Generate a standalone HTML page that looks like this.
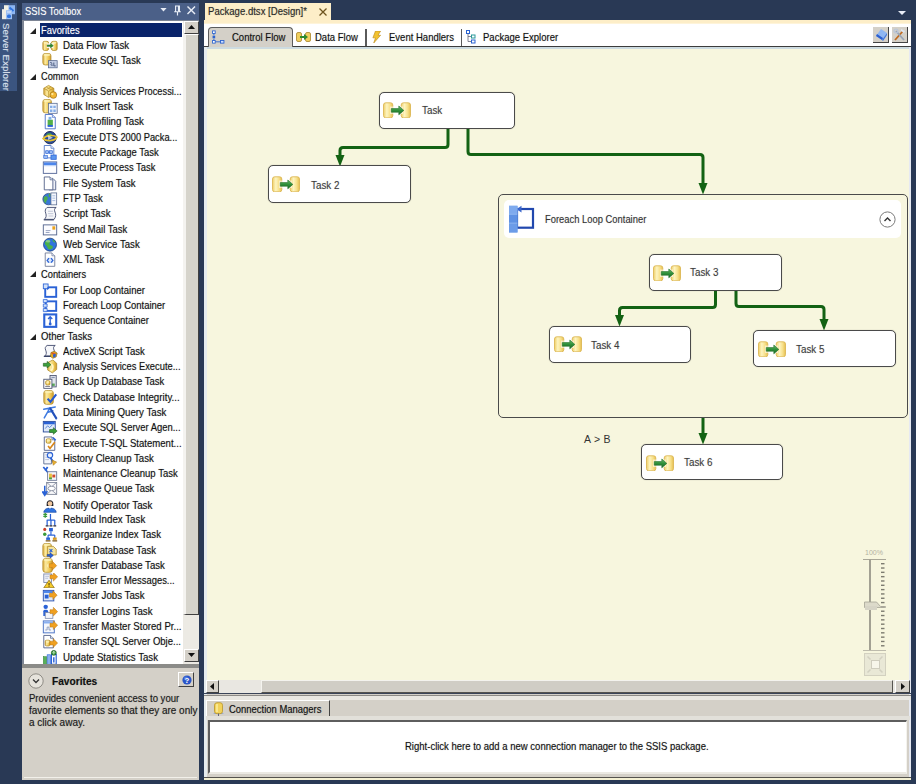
<!DOCTYPE html>
<html><head><meta charset="utf-8"><title>Package.dtsx [Design]</title>
<style>
html,body{margin:0;padding:0}
body{width:916px;height:784px;background:#293955;position:relative;overflow:hidden;font-family:"Liberation Sans",sans-serif;font-size:10.3px;color:#111}
div,svg{position:absolute;box-sizing:border-box}
.t{text-shadow:0 0 1px rgba(0,0,0,.35);display:inline-block;transform:scaleX(.924);transform-origin:0 50%;white-space:nowrap}
.t2{text-shadow:0 0 1px rgba(0,0,0,.25);display:inline-block;transform:scaleX(.965);transform-origin:0 50%;white-space:nowrap}
.row{left:23px;width:162px;height:15.29px;line-height:15.29px}
.row .tri{left:6.5px;top:5px;width:6px;height:6px}
.row .ic{left:19px;top:0;width:16px;height:15.29px}
.row .cat{left:17px;top:.3px;width:142px;height:13.800px;line-height:15.6px;padding-left:1px}
.row .cat.sel{background:#0a246a;color:#fff}
.row .cat.sel .t,.w .t{text-shadow:0 0 1px rgba(255,255,255,.4)}
.row .it{left:39.5px;top:0;width:124px;height:15.29px;overflow:hidden}
.task{background:#fff;border:1.2px solid #4a4a4a;border-radius:5px;box-shadow:0 0 1px rgba(0,0,0,.35)}
.tic{position:static;display:block;width:28px;height:16px}
.tl{line-height:14px;height:14px;font-size:10.2px;color:#3c3c3c}
</style></head><body>
<svg style="width:0;height:0;left:0;top:0"><defs><linearGradient id="gy" x1="0" x2="1" y1="0" y2="0"><stop offset="0" stop-color="#d9a93a"/><stop offset=".3" stop-color="#fbeaa0"/><stop offset=".65" stop-color="#f1cd5c"/><stop offset="1" stop-color="#cf9c2c"/></linearGradient></defs></svg>
<!-- left auto-hide strip -->
<div style="left:0;top:3px;width:17px;height:88px;background:#3b5580"></div>
<svg style="left:0;top:3px;width:17px;height:18px" viewBox="0 0 17 18"><rect x="4" y="2.2" width="5" height="9" fill="#f2f1e4"/><rect x="8.5" y="2.2" width="6.5" height="9" fill="#8db6f2"/><path d="M9.5 4.5l4 3.5" stroke="#2f74e0" stroke-width="2"/><rect x="2" y="6.2" width="4.2" height="10" fill="#efeee6"/><rect x="6" y="7.2" width="6" height="9" fill="#9cc0f4"/><rect x="7" y="11.5" width="4" height="3.5" rx="1.5" fill="#2f74e0"/><path d="M7 9h4" stroke="#dfe9fb" stroke-width="1"/></svg>
<div class="w" style="left:12px;top:23px;width:70px;height:12px;line-height:12px;color:#dfe6f2;transform:rotate(90deg);transform-origin:0 0;font-size:9.5px"><span class="t" style="transform:scaleX(1.03)">Server Explorer</span></div>

<!-- toolbox -->
<div style="left:22px;top:3px;width:177px;height:17px;background:#4b6088"></div>
<div class="w" style="left:24.5px;top:4.3px;height:15px;line-height:15px;color:#fff"><span class="t" style="transform:scaleX(.913)">SSIS Toolbox</span></div>
<svg style="left:160px;top:8.2px;width:7px;height:3.6px" viewBox="0 0 7 4"><path d="M0 0h7L3.5 4z" fill="#e8edf6"/></svg>
<svg style="left:173px;top:4.800px;width:9px;height:11.5px" viewBox="0 0 9 12"><path d="M2.5 1h4v6h-4zM1 7h7M4.5 7v4" stroke="#e8edf6" stroke-width="1.2" fill="none"/><path d="M5.5 1v6" stroke="#e8edf6" stroke-width="1.2"/></svg>
<svg style="left:187px;top:6px;width:8.5px;height:8.5px" viewBox="0 0 9 9"><path d="M.5.5l8 8M8.5.5l-8 8" stroke="#e8edf6" stroke-width="1.5"/></svg>
<div style="left:22px;top:20px;width:177px;height:644px;background:#fff;border-left:2px solid #7d8594;border-top:1.5px solid #7d8594"></div>
<div class="row" style="top:22.70px"><svg class="tri" viewBox="0 0 5 5"><path d="M5 0v5H0z" fill="#222"/></svg><div class="cat sel"><span class="t" style="transform:scaleX(0.911)">Favorites</span></div></div>
<div class="row" style="top:37.99px"><svg class="ic" viewBox="0 0 16 16"><rect x="0.5" y="3.5" width="6" height="9.5" rx="1.7" fill="url(#gy)" stroke="#b08a28" stroke-width="0.8"/><ellipse cx="3.5" cy="5.1" rx="2.4" ry="1.2" fill="#fdf3b8" opacity=".8"/><rect x="9.5" y="3.5" width="6" height="9.5" rx="1.7" fill="url(#gy)" stroke="#b08a28" stroke-width="0.8"/><ellipse cx="12.5" cy="5.1" rx="2.4" ry="1.2" fill="#fdf3b8" opacity=".8"/><rect x="4.5" y="5.5" width="7" height="5" fill="#fff" opacity=".85"/><path d="M5 7.2h3.5v-1.700l3 2.5-3 2.5v-1.700H5z" fill="#2e8b2e" stroke="#1c5c1c" stroke-width=".4"/></svg><div class="it"><span class="t" style="transform:scaleX(0.943)">Data Flow Task</span></div></div>
<div class="row" style="top:53.28px"><svg class="ic" viewBox="0 0 16 16"><rect x="0.5" y="0.5" width="8.5" height="12" rx="2.4" fill="url(#gy)" stroke="#b08a28" stroke-width="0.8"/><ellipse cx="4.75" cy="2.1" rx="3.65" ry="1.2" fill="#fdf3b8" opacity=".8"/><rect x="6.5" y="8" width="9" height="7.5" fill="#c3cee4" stroke="#56688e" stroke-width=".8"/><path d="M8 10.5c1-1.5 2.5 0 1.5 1s0 2 1.5 1M12 10v3.5h2" stroke="#3a4a72" fill="none" stroke-width=".9"/></svg><div class="it"><span class="t" style="transform:scaleX(0.923)">Execute SQL Task</span></div></div>
<div class="row" style="top:68.57px"><svg class="tri" viewBox="0 0 5 5"><path d="M5 0v5H0z" fill="#222"/></svg><div class="cat"><span class="t" style="transform:scaleX(0.9)">Common</span></div></div>
<div class="row" style="top:83.86px"><svg class="ic" viewBox="0 0 16 16"><path d="M1.5 4.5l5-3 5.5 3v6.5l-5.5 3-5-3z" fill="url(#gy)" stroke="#b08a28" stroke-width=".8"/><path d="M1.5 4.5l5 3 5.5-3M6.5 7.5v6.5M4 3l5 3M9 3L4 6" stroke="#b08a28" fill="none" stroke-width=".6"/><circle cx="11.5" cy="11.5" r="3.5" fill="#f2b632" stroke="#9a6c14" stroke-width=".7"/><circle cx="10.5" cy="10.5" r="1.2" fill="#fde9a0"/></svg><div class="it"><span class="t" style="transform:scaleX(0.901)">Analysis Services Processi...</span></div></div>
<div class="row" style="top:99.15px"><svg class="ic" viewBox="0 0 16 16"><rect x="0.5" y="0.5" width="9" height="14" rx="2.5" fill="url(#gy)" stroke="#b08a28" stroke-width="0.8"/><ellipse cx="5.0" cy="2.1" rx="3.9" ry="1.2" fill="#fdf3b8" opacity=".8"/><rect x="6.5" y="4.5" width="9" height="10.5" fill="#eef3fb" stroke="#56688e" stroke-width=".8"/><path d="M8 7h2.5v2.5H8zM11.5 7H14v2.5h-2.5zM8 11h2.5v2.5H8zM11.5 11H14v2.5h-2.5z" fill="#86aee8"/></svg><div class="it"><span class="t" style="transform:scaleX(0.968)">Bulk Insert Task</span></div></div>
<div class="row" style="top:114.44px"><svg class="ic" viewBox="0 0 16 16"><path d="M3 0.5h7.5l3 3v12H3z" fill="#fff" stroke="#3f66c4" stroke-width=".9"/><path d="M10.5 0.5v3h3" fill="#dfe6f4" stroke="#3f66c4" stroke-width=".7"/><rect x="5.5" y="6" width="5.5" height="6" fill="#55b04a"/><rect x="5.5" y="11.5" width="5.5" height="2" fill="#2a62d6"/><rect x="6.5" y="3" width="3" height="3" fill="#7fb0ea"/></svg><div class="it"><span class="t" style="transform:scaleX(0.945)">Data Profiling Task</span></div></div>
<div class="row" style="top:129.73px"><svg class="ic" viewBox="0 0 16 16"><circle cx="8" cy="8" r="6.5" fill="#274a9a" stroke="#16234a" stroke-width=".9"/><path d="M4 5c2-2 5-2 6 0s-2 3-3 2z" fill="#4aa24a"/><path d="M.8 9c3-4 11.5-4 14.4-1.5c-2 4.5-11.5 4.5-14.4 1.5z" fill="none" stroke="#e6c030" stroke-width="1.800"/><path d="M6 5.5l5 2.5-5 2.5z" fill="#f4f4f4" opacity=".7"/></svg><div class="it"><span class="t" style="transform:scaleX(0.904)">Execute DTS 2000 Packa...</span></div></div>
<div class="row" style="top:145.02px"><svg class="ic" viewBox="0 0 16 16"><path d="M2 0.5h7l3 3v10H2z" fill="#fff" stroke="#4a72c4" stroke-width=".9"/><path d="M9 0.5v3h3" fill="#dfe6f4" stroke="#4a72c4" stroke-width=".7"/><rect x="3.5" y="6" width="3" height="3" fill="#9dbdf2" stroke="#2a62d6" stroke-width=".7"/><rect x="7.5" y="6" width="3" height="3" fill="#9dbdf2" stroke="#2a62d6" stroke-width=".7"/><path d="M6.5 7.5h1" stroke="#2a62d6"/><rect x="9" y="10.5" width="5.5" height="4.5" fill="#5a96ee" stroke="#2a62d6" stroke-width=".8"/><rect x="1.5" y="11" width="4" height="3" fill="#9dbdf2" stroke="#2a62d6" stroke-width=".6"/></svg><div class="it"><span class="t" style="transform:scaleX(0.92)">Execute Package Task</span></div></div>
<div class="row" style="top:160.31px"><svg class="ic" viewBox="0 0 16 16"><rect x="1" y="2" width="14" height="12" fill="#fdfdff" stroke="#5a6c9c" stroke-width="1"/><rect x="1.5" y="2.5" width="13" height="3" fill="#4d86ec"/><rect x="1.5" y="5.5" width="13" height="1" fill="#b9d0f6"/></svg><div class="it"><span class="t" style="transform:scaleX(0.914)">Execute Process Task</span></div></div>
<div class="row" style="top:175.60px"><svg class="ic" viewBox="0 0 16 16"><path d="M7 2.5h4l3 3v9H7z" fill="#eef1f8" stroke="#4a5a84" stroke-width=".9"/><path d="M2 1h6l3 3v10.5H2z" fill="#fff" stroke="#4a5a84" stroke-width=".9"/><path d="M8 1v3h3" fill="#dfe6f4" stroke="#4a5a84" stroke-width=".7"/></svg><div class="it"><span class="t" style="transform:scaleX(0.934)">File System Task</span></div></div>
<div class="row" style="top:190.89px"><svg class="ic" viewBox="0 0 16 16"><circle cx="6.5" cy="8.5" r="6" fill="#3a78d6" stroke="#1c3a70" stroke-width=".7"/><path d="M2 6c2-1 4 0 3.5 2S3 11 4 13c-2-1-3.5-4-2-7zM7 3c2 0 2 2 1 3s-2 0-1-3z" fill="#4cae4c"/><rect x="9" y="2" width="6" height="12.5" fill="#f4f7fd" stroke="#56688e" stroke-width=".8"/><path d="M10.5 5h3M10.5 7.5h3M10.5 10h3" stroke="#9fb4dc" stroke-width=".9"/></svg><div class="it"><span class="t" style="transform:scaleX(0.921)">FTP Task</span></div></div>
<div class="row" style="top:206.18px"><svg class="ic" viewBox="0 0 16 16"><path d="M5 1.5h9.5c-2 .8-2.2 3-1.2 5s1 5-1 7.5H2c2-1.5 2.5-4 1.5-6.5S3 3 5 1.5z" fill="#f6f7fa" stroke="#3a4468" stroke-width=".9"/><path d="M1.5 14.5h10.5" stroke="#3a4468" stroke-width="1.2"/><path d="M6 5.5h5M6 8h5.5M6.5 10.5h5" stroke="#a8b0c6" stroke-width=".7"/></svg><div class="it"><span class="t" style="transform:scaleX(0.947)">Script Task</span></div></div>
<div class="row" style="top:222.27px"><svg class="ic" viewBox="0 0 16 16"><rect x="1" y="3" width="14" height="10.5" fill="#fcfcff" stroke="#5a6a92" stroke-width="1"/><rect x="10.5" y="4.5" width="3" height="3.5" fill="#eaa21c"/><path d="M3.5 9h5M3.5 11h4" stroke="#8896b8" stroke-width=".9"/></svg><div class="it"><span class="t" style="transform:scaleX(0.923)">Send Mail Task</span></div></div>
<div class="row" style="top:236.76px"><svg class="ic" viewBox="0 0 16 16"><circle cx="8" cy="8" r="6.800" fill="#2f74dc" stroke="#173a78" stroke-width=".8"/><path d="M3 5c1.5-2 4-2.5 5-1s-1 2-.5 3.5 3 1 3.5 2.5-2 3.5-4 3-1.5-3-3-4-1.5-2.5-1-4zM10.5 3c1.5 0 3 1.5 3 3-1 0-2.5-.5-3-3z" fill="#49b049"/><ellipse cx="6" cy="4.5" rx="2.5" ry="1.3" fill="#fff" opacity=".35"/></svg><div class="it"><span class="t" style="transform:scaleX(0.935)">Web Service Task</span></div></div>
<div class="row" style="top:252.05px"><svg class="ic" viewBox="0 0 16 16"><path d="M3 1h7l3 3v11H3z" fill="#fff" stroke="#6a7694" stroke-width=".9"/><path d="M10 1v3h3" fill="#dfe6f4" stroke="#6a7694" stroke-width=".7"/><rect x="4.5" y="6" width="7" height="5.5" fill="#dbe8fb"/><path d="M7 6.5L5 8.800l2 2.3M9 6.5l2 2.3-2 2.3" stroke="#2a62d6" fill="none" stroke-width="1.3"/></svg><div class="it"><span class="t" style="transform:scaleX(0.925)">XML Task</span></div></div>
<div class="row" style="top:266.34px"><svg class="tri" viewBox="0 0 5 5"><path d="M5 0v5H0z" fill="#222"/></svg><div class="cat"><span class="t" style="transform:scaleX(0.906)">Containers</span></div></div>
<div class="row" style="top:282.63px"><svg class="ic" viewBox="0 0 16 16"><rect x="3" y="4.5" width="11.5" height="10" fill="#fff" stroke="#2a62d6" stroke-width="2"/><rect x="1" y="1" width="5" height="5" fill="#cfe0fa" stroke="#2a62d6" stroke-width=".9"/><path d="M5 7.5l3-3h-3z" fill="#2a62d6"/></svg><div class="it"><span class="t" style="transform:scaleX(0.923)">For Loop Container</span></div></div>
<div class="row" style="top:297.92px"><svg class="ic" viewBox="0 0 16 16"><rect x="3.5" y="3.5" width="11" height="10" fill="#fff" stroke="#2a62d6" stroke-width="2"/><path d="M1 1.5h4v3.3H1zM1 6.3h4v3.3H1zM1 11h4v3.3H1z" fill="#cfe0fa" stroke="#2a62d6" stroke-width=".8"/></svg><div class="it"><span class="t" style="transform:scaleX(0.921)">Foreach Loop Container</span></div></div>
<div class="row" style="top:313.21px"><svg class="ic" viewBox="0 0 16 16"><rect x="2" y="1.5" width="12.5" height="13" fill="#fff" stroke="#2a62d6" stroke-width="2.2"/><path d="M8.2 4v8M6 6.2l2.2-2.2 2.2 2.2" stroke="#2a62d6" stroke-width="1.4" fill="none"/><circle cx="8.2" cy="11.5" r="1.5" fill="#2a62d6"/></svg><div class="it"><span class="t" style="transform:scaleX(0.915)">Sequence Container</span></div></div>
<div class="row" style="top:328.50px"><svg class="tri" viewBox="0 0 5 5"><path d="M5 0v5H0z" fill="#222"/></svg><div class="cat"><span class="t" style="transform:scaleX(0.932)">Other Tasks</span></div></div>
<div class="row" style="top:343.79px"><svg class="ic" viewBox="0 0 16 16"><path d="M5 1.5h8.5c-2 .8-2.2 3-1.2 5s1 4-1 6H2.5c2-1.5 2-3.5 1-6S3 3 5 1.5z" fill="#f6f7fa" stroke="#3a4468" stroke-width=".9"/><path d="M1.5 13h8" stroke="#3a4468" stroke-width="1.2"/><path d="M9 9l3.5-1.5 3 2-1 4-3.5 1.5-2.5-2z" fill="#e8b020" stroke="#7a5a10" stroke-width=".6"/><path d="M11 11l3-1v3l-2.5 1.5z" fill="#2a5fd0"/><path d="M9 9l2 2 3.5-1.5" fill="#d03a2a" opacity=".8"/></svg><div class="it"><span class="t" style="transform:scaleX(0.931)">ActiveX Script Task</span></div></div>
<div class="row" style="top:359.08px"><svg class="ic" viewBox="0 0 16 16"><path d="M6 3.5l5-2.5 4 3.5v6.5l-4.5 3.5-5-3z" fill="url(#gy)" stroke="#b08a28" stroke-width=".8"/><path d="M9.5 5.5c2 1 2 5-.5 6.5" stroke="#fff6c8" stroke-width="2" fill="none"/><path d="M1 4.5h4V2.5l4 3.5-4 3.5V7.5H1z" fill="#3ea03e" stroke="#1c5c1c" stroke-width=".6"/></svg><div class="it"><span class="t" style="transform:scaleX(0.909)">Analysis Services Execute...</span></div></div>
<div class="row" style="top:374.37px"><svg class="ic" viewBox="0 0 16 16"><rect x="8" y="1.5" width="6.5" height="12" fill="#e4e8f0" stroke="#4a5270" stroke-width=".9"/><rect x="9.5" y="3" width="3.5" height="1.3" fill="#8a94b0"/><rect x="9.5" y="10" width="3.5" height="2.5" fill="#58a858"/><rect x="1.5" y="5.5" width="8.5" height="9.5" fill="#fff" stroke="#4a5270" stroke-width=".9"/><rect x="3.5" y="7" width="4.5" height="4.5" rx="1.3" fill="url(#gy)" stroke="#b08a28" stroke-width="0.8"/><ellipse cx="5.75" cy="8.6" rx="1.65" ry="1.2" fill="#fdf3b8" opacity=".8"/><path d="M3 13h5" stroke="#667" stroke-width=".9"/></svg><div class="it"><span class="t" style="transform:scaleX(0.923)">Back Up Database Task</span></div></div>
<div class="row" style="top:389.66px"><svg class="ic" viewBox="0 0 16 16"><rect x="1.5" y="0.5" width="10" height="14.5" rx="2.8" fill="url(#gy)" stroke="#b08a28" stroke-width="0.8"/><ellipse cx="6.5" cy="2.1" rx="4.4" ry="1.2" fill="#fdf3b8" opacity=".8"/><path d="M5.5 9l3 3.5 6-8" stroke="#2558d0" stroke-width="2.2" fill="none"/></svg><div class="it"><span class="t" style="transform:scaleX(0.945)">Check Database Integrity...</span></div></div>
<div class="row" style="top:404.95px"><svg class="ic" viewBox="0 0 16 16"><path d="M1.5 4.5l12-2.5M8 3L2 13.5M7.5 3l7 11.5M6 7.5l5-1.5" stroke="#3f7ae0" stroke-width="1.6" fill="none" stroke-linecap="round"/><path d="M8 3l7 11.5" stroke="#2450b8" stroke-width="2"/></svg><div class="it"><span class="t" style="transform:scaleX(0.943)">Data Mining Query Task</span></div></div>
<div class="row" style="top:420.24px"><svg class="ic" viewBox="0 0 16 16"><rect x="1" y="1.5" width="12.5" height="11" fill="#dfe9f8" stroke="#2f4f9c" stroke-width="1"/><rect x="1.5" y="2" width="11.5" height="2.5" fill="#2a62d6"/><path d="M3 9l2.5-3 2 2 3-3" stroke="#5a86d8" fill="none" stroke-width="1"/><path d="M7.5 10h4V8l4 3.5-4 3.5v-2h-4z" fill="#3aa03a" stroke="#1c5c1c" stroke-width=".6"/></svg><div class="it"><span class="t" style="transform:scaleX(0.916)">Execute SQL Server Agen...</span></div></div>
<div class="row" style="top:435.53px"><svg class="ic" viewBox="0 0 16 16"><path d="M2 1h8l3 3v11H2z" fill="#fff" stroke="#4a5a84" stroke-width=".9"/><path d="M10 1v3h3" fill="#dfe6f4" stroke="#4a5a84" stroke-width=".7"/><rect x="4" y="3" width="5" height="4.5" rx="1.3" fill="url(#gy)" stroke="#b08a28" stroke-width="0.8"/><ellipse cx="6.5" cy="4.6" rx="1.9" ry="1.2" fill="#fdf3b8" opacity=".8"/><path d="M6 10.5l2 2.5 5-6.5" stroke="#d8861a" stroke-width="1.800" fill="none"/><path d="M11 1.5l3 3" stroke="#2a62d6" stroke-width="1.6"/></svg><div class="it"><span class="t" style="transform:scaleX(0.929)">Execute T-SQL Statement...</span></div></div>
<div class="row" style="top:450.82px"><svg class="ic" viewBox="0 0 16 16"><path d="M1.5 1.5h8v12h-8z" fill="#f4f6fb" stroke="#56688e" stroke-width=".9"/><path d="M3 4h4M3 6.5h3M3 9h4" stroke="#a8b4d0" stroke-width=".8"/><circle cx="8" cy="4.5" r="2.800" fill="#e8f0fc" stroke="#2a62d6" stroke-width="1.2"/><path d="M8.5 7l3 4.5" stroke="#2a62d6" stroke-width="2"/><path d="M10 9.5l5 2-3.5 3.5z" fill="#eab030" stroke="#9a6c14" stroke-width=".5"/></svg><div class="it"><span class="t" style="transform:scaleX(0.935)">History Cleanup Task</span></div></div>
<div class="row" style="top:466.11px"><svg class="ic" viewBox="0 0 16 16"><path d="M1 1l5 6M5.5 1L3 5" stroke="#2a62d6" stroke-width="1.800"/><rect x="5.5" y="6" width="9.5" height="9" fill="#f4f6fb" stroke="#6a7694" stroke-width=".9"/><rect x="7" y="8" width="3" height="5.5" fill="#e8c040"/><rect x="10.5" y="9" width="3" height="3" fill="#d04a2a"/><rect x="7" y="12" width="3" height="2" fill="#4aa04a"/></svg><div class="it"><span class="t" style="transform:scaleX(0.925)">Maintenance Cleanup Task</span></div></div>
<div class="row" style="top:481.40px"><svg class="ic" viewBox="0 0 16 16"><rect x="4.5" y="1.5" width="10.5" height="12.5" fill="#f8f8fa" stroke="#7a8296" stroke-width=".9"/><path d="M4.5 1.5l5.2 4.5 5.3-4.5M4.5 14l5.2-4.5 5.3 4.5" stroke="#7a8296" fill="none" stroke-width=".8"/><ellipse cx="9.700" cy="7.800" rx="3.800" ry="2.3" fill="#fff" stroke="#7a8296" stroke-width=".8"/><path d="M2.5 5v9M.3 11.5l2.2 3.5 2.2-3.5z" stroke="#2a62d6" stroke-width="1.6" fill="#2a62d6"/></svg><div class="it"><span class="t" style="transform:scaleX(0.919)">Message Queue Task</span></div></div>
<div class="row" style="top:497.69px"><svg class="ic" viewBox="0 0 16 16"><path d="M4.5 6.5c-.5-5.5 7.5-5.5 7 0v2h-7z" fill="#1a1a22"/><circle cx="8" cy="6" r="2.5" fill="#f0c8a0"/><path d="M1.5 15c0-6 13-6 13 0z" fill="#2f74e0" stroke="#1c4aa0" stroke-width=".7"/><path d="M6.5 9.5l1.5 2 1.5-2z" fill="#fff"/></svg><div class="it"><span class="t" style="transform:scaleX(0.955)">Notify Operator Task</span></div></div>
<div class="row" style="top:511.98px"><svg class="ic" viewBox="0 0 16 16"><path d="M3 1v5M1 2.5h4M1 4.5h4" stroke="#3a9a3a" stroke-width="1.4"/><path d="M8.5 2v6M5 8v6M9 8.5v5.5M13 8.5v5.5M5 8.5h8" stroke="#2a62d6" stroke-width="1.3" fill="none"/><path d="M3.5 14.5h3M7.5 14.5h3M11.5 14.5h3" stroke="#223" stroke-width="1.3"/></svg><div class="it"><span class="t" style="transform:scaleX(0.948)">Rebuild Index Task</span></div></div>
<div class="row" style="top:527.27px"><svg class="ic" viewBox="0 0 16 16"><circle cx="2.5" cy="2.5" r="1.6" fill="#c8402a"/><circle cx="2.5" cy="7.5" r="1.800" fill="#3a9a3a"/><rect x="7" y="1" width="4" height="3.5" fill="#2a62d6"/><path d="M9 4.5v4M6 8.5h7M6 8.5v3M13 8.5v3" stroke="#2a62d6" stroke-width="1.2" fill="none"/><rect x="4" y="11" width="4" height="2.5" fill="#2a62d6"/><rect x="11" y="11" width="4" height="2.5" fill="#d89a20"/><path d="M3.5 14.5h5M10.5 14.5h5" stroke="#7a5410" stroke-width="1.3"/></svg><div class="it"><span class="t" style="transform:scaleX(0.937)">Reorganize Index Task</span></div></div>
<div class="row" style="top:542.56px"><svg class="ic" viewBox="0 0 16 16"><rect x="0.5" y="0.5" width="9" height="14" rx="2.5" fill="url(#gy)" stroke="#b08a28" stroke-width="0.8"/><ellipse cx="5.0" cy="2.1" rx="3.9" ry="1.2" fill="#fdf3b8" opacity=".8"/><path d="M5.5 3.5h6l3 3v6h-9z" fill="#f4e4a0" stroke="#b08a28" stroke-width=".8"/><path d="M5 12h3v-2l3.5 3-3.5 3v-2H5z" fill="#2a62d6" stroke="#1c3c90" stroke-width=".5"/><path d="M7.5 6.5l3 3M10.5 6.5l-3 3" stroke="#2a62d6" stroke-width="1.2"/></svg><div class="it"><span class="t" style="transform:scaleX(0.931)">Shrink Database Task</span></div></div>
<div class="row" style="top:557.85px"><svg class="ic" viewBox="0 0 16 16"><rect x="0.5" y="0.5" width="10" height="14.5" rx="2.8" fill="url(#gy)" stroke="#b08a28" stroke-width="0.8"/><ellipse cx="5.5" cy="2.1" rx="4.4" ry="1.2" fill="#fdf3b8" opacity=".8"/><circle cx="7" cy="8" r="2.2" fill="#fdf0b0"/><path d="M7 6h3.5v-2.5l4.5 4.5-4.5 4.5v-2.5H7z" fill="#f0a020" stroke="#b87410" stroke-width=".5"/></svg><div class="it"><span class="t" style="transform:scaleX(0.937)">Transfer Database Task</span></div></div>
<div class="row" style="top:573.14px"><svg class="ic" viewBox="0 0 16 16"><rect x="1.5" y="1" width="8" height="9" fill="#eef1f8" stroke="#7a86a8" stroke-width=".9"/><path d="M3 3.5h4M3 5.5h3" stroke="#a8b4d0" stroke-width=".8"/><path d="M8 2h3.5v-2.5l4.5 4.5-4.5 4.5v-2.5H8z" fill="#f0a020" stroke="#b87410" stroke-width=".5"/><path d="M7 7.5l5.5 8h-11z" fill="#f6cc28" stroke="#8a6a10" stroke-width=".8"/><path d="M7 10.5v2.5M7 14v.6" stroke="#4a3a08" stroke-width="1.100"/></svg><div class="it"><span class="t" style="transform:scaleX(0.915)">Transfer Error Messages...</span></div></div>
<div class="row" style="top:588.43px"><svg class="ic" viewBox="0 0 16 16"><rect x="1" y="2.5" width="11" height="11" fill="#dfe9f8" stroke="#2f56b4" stroke-width="1"/><rect x="1.5" y="3" width="10" height="2.2" fill="#4d86ec"/><rect x="2.5" y="7" width="4" height="4" fill="#2a62d6"/><path d="M7.5 5.5h3.5v-2.5l4.5 4.5-4.5 4.5v-2.5H7.5z" fill="#f0a020" stroke="#b87410" stroke-width=".5"/></svg><div class="it"><span class="t" style="transform:scaleX(0.944)">Transfer Jobs Task</span></div></div>
<div class="row" style="top:604.32px"><svg class="ic" viewBox="0 0 16 16"><circle cx="3.5" cy="3" r="2.3" fill="#2a62d6"/><path d="M1 12.5V7.5c0-2 5-2 5 0v5z" fill="#2a62d6"/><rect x="3" y="9" width="8" height="6" fill="#f4f6fb" stroke="#7a86a8" stroke-width=".8"/><path d="M8 6h3.5v-2.5l4.5 4.5-4.5 4.5v-2.5H8z" fill="#f0a020" stroke="#b87410" stroke-width=".5"/></svg><div class="it"><span class="t" style="transform:scaleX(0.942)">Transfer Logins Task</span></div></div>
<div class="row" style="top:619.01px"><svg class="ic" viewBox="0 0 16 16"><rect x="1" y="2" width="11.5" height="12.5" fill="#f4f7fd" stroke="#4a72c4" stroke-width="1"/><rect x="1.5" y="2.5" width="10.5" height="2.2" fill="#8ab0f0"/><path d="M3 11.5h2V8.5h2v3h2" stroke="#8896b8" fill="none" stroke-width=".9"/><path d="M8 4.5h3.5v-2.5l4.5 4.5-4.5 4.5v-2.5H8z" fill="#f0a020" stroke="#b87410" stroke-width=".5"/></svg><div class="it"><span class="t" style="transform:scaleX(0.936)">Transfer Master Stored Pr...</span></div></div>
<div class="row" style="top:634.30px"><svg class="ic" viewBox="0 0 16 16"><path d="M1.5 1.5h7l3 3v10H1.5z" fill="#fff" stroke="#4a5a84" stroke-width=".9"/><path d="M8.5 1.5v3h3" fill="#dfe6f4" stroke="#4a5a84" stroke-width=".7"/><rect x="3" y="6.5" width="5" height="6" rx="1.4" fill="url(#gy)" stroke="#b08a28" stroke-width="0.8"/><ellipse cx="5.5" cy="8.1" rx="1.9" ry="1.2" fill="#fdf3b8" opacity=".8"/><path d="M8 7.5h3.5v-2.5l4.5 4.5-4.5 4.5v-2.5H8z" fill="#f0a020" stroke="#b87410" stroke-width=".5"/></svg><div class="it"><span class="t" style="transform:scaleX(0.926)">Transfer SQL Server Obje...</span></div></div>
<div class="row" style="top:649.59px"><svg class="ic" viewBox="0 0 16 16"><rect x="1" y="7" width="3.5" height="8" fill="#58b058" stroke="#2a7a2a" stroke-width=".5"/><rect x="5" y="5" width="3.5" height="10" fill="#8ab0f0" stroke="#2a62d6" stroke-width=".6"/><rect x="9.5" y="4.5" width="5" height="10.5" fill="#fff" stroke="#2a62d6" stroke-width="1.2"/><path d="M12 7.5v5.5" stroke="#2a62d6" stroke-width="1.5"/><circle cx="12" cy="3" r="2.6" fill="#3ea03e" stroke="#14541a" stroke-width=".7"/><path d="M12 1.5v3M10.800 2.800l1.2-1.3 1.2 1.3" stroke="#fff" stroke-width=".7" fill="none"/></svg><div class="it"><span class="t" style="transform:scaleX(0.94)">Update Statistics Task</span></div></div>
<!-- toolbox scrollbar -->
<div style="left:183px;top:21px;width:16px;height:643px;background:#eceae4"></div>
<div class="sb" style="left:184px;top:21px;width:14.5px;height:12.5px;background:#d4d0c8;border:1px solid;border-color:#fff #404040 #404040 #fff"></div>
<svg style="left:188px;top:25px;width:7px;height:4px" viewBox="0 0 7 4"><path d="M0 4h7L3.5 0z" fill="#111"/></svg>
<div style="left:183px;top:33.5px;width:15.5px;height:581px;background:#d6d4cc;border:1px solid;border-color:#fff #404040 #404040 #f4f3f0;border-left-width:3px"></div>
<div style="left:184px;top:648.5px;width:14.5px;height:13.5px;background:#d4d0c8;border:1px solid;border-color:#fff #404040 #404040 #fff"></div>
<svg style="left:188px;top:653px;width:7px;height:4px" viewBox="0 0 7 4"><path d="M0 0h7L3.5 4z" fill="#111"/></svg>
<!-- toolbox description -->
<div style="left:22px;top:663.5px;width:177px;height:4.5px;background:#8b8b88"></div>
<div style="left:22px;top:667.5px;width:177px;height:112px;background:#d4d0c8"></div>
<div style="left:24px;top:776.5px;width:173px;height:1px;background:#f2f0ea"></div>
<svg style="left:27.5px;top:673px;width:16px;height:16px" viewBox="0 0 16 16"><circle cx="8" cy="8" r="7.2" fill="#e6e3dc" stroke="#8f8c85" stroke-width="1"/><path d="M5 6.5l3 3 3-3" stroke="#333" stroke-width="1.3" fill="none"/></svg>
<div style="left:51.700px;top:674px;height:14px;line-height:14px;font-weight:bold;font-size:11px"><span class="t" style="transform:scaleX(.925)">Favorites</span></div>
<div style="left:178.3px;top:672.3px;width:16.2px;height:15px;background:#d4d0c8;border:1px solid;border-color:#fff #404040 #404040 #fff"></div>
<svg style="left:181.5px;top:674.5px;width:10px;height:10px" viewBox="0 0 10 10"><circle cx="5" cy="5" r="4.6" fill="#2a55c8"/><circle cx="4" cy="3.5" r="2" fill="#5f8cf0" opacity=".7"/><text x="5" y="8" font-size="8" font-weight="bold" fill="#fff" text-anchor="middle" font-family="Liberation Sans, sans-serif">?</text></svg>
<div style="left:29px;top:692px;width:200px;line-height:12.150px;font-size:11px;color:#1a1a1a"><span class="t" style="position:static;display:block;transform:scaleX(.868)">Provides convenient access to your</span><span class="t" style="position:static;display:block;transform:scaleX(.906)">favorite elements so that they are only</span><span class="t" style="position:static;display:block;transform:scaleX(.91)">a click away.</span></div>

<!-- document tab -->
<div style="left:205px;top:2.5px;width:126px;height:18px;background:#fdeec8"></div>
<div style="left:208px;top:4.700px;height:14px;line-height:14px;color:#2a2a2a"><span class="t" style="transform:scaleX(.929)">Package.dtsx [Design]*</span></div>
<svg style="left:319px;top:7.5px;width:8px;height:8px" viewBox="0 0 8 8"><path d="M.5.5l7 7M7.5.5l-7 7" stroke="#6e5420" stroke-width="1.3"/></svg>
<svg style="left:898px;top:11px;width:8px;height:4px" viewBox="0 0 8 4"><path d="M0 0h8L4 4z" fill="#e8edf6"/></svg>
<!-- document frame -->
<div style="left:204px;top:20px;width:707px;height:759px;background:#d4d0c8"></div>
<div style="left:204px;top:20px;width:707px;height:27px;background:linear-gradient(#fdeec8 0,#fdeec8 3px,#fff 4.5px,#fff 100%)"></div>
<!-- designer tabs -->
<div style="left:204px;top:46px;width:707px;height:1px;background:#3c3c3c"></div>
<div style="left:204px;top:47px;width:707px;height:2px;background:#cddbe0"></div>
<div style="left:208px;top:27px;width:84.5px;height:20px;background:#d4d0c8;border:1.100px solid #5c5c5c;border-bottom:none;border-radius:4px 4px 0 0"></div>
<svg style="left:211px;top:30px;width:14.5px;height:14px" viewBox="0 0 15 16"><rect x="1" y="1" width="3" height="3" fill="#fff" stroke="#2a62d0"/><rect x="1" y="6.5" width="3" height="3" fill="#2a62d0"/><rect x="1" y="12" width="3" height="3" fill="#fff" stroke="#2a62d0"/><rect x="10" y="12" width="4" height="3" fill="#cfe0ff" stroke="#2a62d0"/><path d="M2.5 4v2M2.5 10v2M4 13.5h6" stroke="#2a62d0"/></svg>
<div style="left:231.5px;top:30.5px;height:14px;line-height:14px"><span class="t">Control Flow</span></div>
<svg style="left:295.5px;top:31px;width:15px;height:12px" viewBox="0 0 15 12"><rect x=".5" y="1.5" width="5" height="9" rx="1.5" fill="#f0cf5e" stroke="#a8842a" stroke-width=".8"/><rect x="9.5" y="1.5" width="5" height="9" rx="1.5" fill="#f0cf5e" stroke="#a8842a" stroke-width=".8"/><path d="M4 5h4V3l4 3-4 3V7H4z" fill="#2e8b2e"/></svg>
<div style="left:315px;top:30.5px;height:14px;line-height:14px"><span class="t">Data Flow</span></div>
<div style="left:365px;top:28.5px;width:1.5px;height:17px;background:#5a5a5a"></div>
<svg style="left:371.5px;top:30.5px;width:9.5px;height:12px" viewBox="0 0 11 14"><path d="M4 0h6L7 5h3L2 14l2-6H1z" fill="#f2c230" stroke="#b8861a" stroke-width=".7"/></svg>
<div style="left:388.5px;top:30.5px;height:14px;line-height:14px"><span class="t">Event Handlers</span></div>
<div style="left:460.5px;top:28.5px;width:1.5px;height:17px;background:#5a5a5a"></div>
<svg style="left:466px;top:30px;width:11px;height:14px" viewBox="0 0 11 14"><rect x=".5" y=".5" width="3" height="3" fill="#fff" stroke="#2a62d0"/><rect x="5.5" y="5" width="3.5" height="3" fill="#fff" stroke="#2a9a9a"/><rect x="5.5" y="10" width="3.5" height="3" fill="#fff" stroke="#2a62d0"/><path d="M2 4v7.5h3M2 6.5h3" stroke="#667" fill="none" stroke-width=".8"/></svg>
<div style="left:483px;top:30.5px;height:14px;line-height:14px"><span class="t">Package Explorer</span></div>
<!-- right buttons -->
<div style="left:872.5px;top:26.5px;width:16.5px;height:16.5px;background:#d4d0c8;border-right:1.5px solid #444;border-bottom:1.5px solid #444"></div>
<svg style="left:875px;top:28px;width:13px;height:13px" viewBox="0 0 13 13"><path d="M6 1l6 4-5 7-6-4z" fill="#8fb6f2"/><path d="M1 8l6 4 1-2-6-4z" fill="#2b5fd0"/><path d="M7 12l5-7v2l-4 6z" fill="#3f77e0"/></svg>
<div style="left:891.5px;top:26.5px;width:16.5px;height:16.5px;background:#d4d0c8;border-right:1.5px solid #444;border-bottom:1.5px solid #444"></div>
<svg style="left:893px;top:28px;width:13px;height:13px" viewBox="0 0 13 13"><path d="M2 12L10 3" stroke="#c06a20" stroke-width="1.800"/><path d="M11 12L3 3" stroke="#9aa6b8" stroke-width="1.800"/><path d="M8 1l4 2-1 2-3-2z" fill="#dfe6f2"/><circle cx="3" cy="3" r="2" fill="none" stroke="#b8c6dc" stroke-width="1.2"/></svg>

<!-- canvas -->
<div style="left:206px;top:49px;width:704px;height:631px;background:#f7f6de"></div>
<div style="left:204px;top:47px;width:2.5px;height:732px;background:#e6ecee"></div>
<div style="left:909.3px;top:47px;width:1.700px;height:732px;background:#e6e9f2"></div>
<svg style="left:205px;top:49px;width:706px;height:631px" viewBox="205 49 706 631">
<g fill="none" stroke="#136213" stroke-width="3" stroke-linejoin="round">
<path d="M448 129v15.5q0 3 -3 3H343q-3 0 -3 3V158"/>
<path d="M468 129v22.5q0 3 3 3H700q3 0 3 3V186"/>
<path d="M715.5 291v13.5q0 3 -3 3H622.5q-3 0 -3 3V318"/>
<path d="M736 291v12.5q0 3 3 3H821q3 0 3 3V322"/>
<path d="M703 418V436"/>
</g>
<g fill="#136213">
<path d="M335.5 155h9L340 166.5z"/>
<path d="M698.5 183h9L703 194.5z"/>
<path d="M615 315h9L619.5 326.5z"/>
<path d="M819.5 319h9L824 330.5z"/>
<path d="M698.5 433h9L703 444.5z"/>
</g>
</svg>
<!-- foreach container -->
<div style="left:498px;top:193.5px;width:410px;height:224.5px;border:1.3px solid #4a4a4a;border-radius:5px"></div>
<div style="left:504px;top:200px;width:397px;height:38px;background:#fff;border-radius:5px"></div>
<svg style="left:509px;top:205px;width:26px;height:28px" viewBox="0 0 26 28"><rect x="8" y="4" width="16" height="18.700" fill="#fff" stroke="#2148ae" stroke-width="2.2"/><path d="M12.5 .8L7.5 4.2l5 3.4z" fill="#3a66cc"/><rect x="0" y=".8" width="8.5" height="26.700" fill="#6f9fe8"/><rect x="0" y=".8" width="8.5" height="8.3" fill="#7eaaee"/><rect x="0" y="9.6" width="8.5" height="8.3" fill="#5f92e4"/><rect x="0" y="18.4" width="8.5" height="9" fill="#6c9ce8"/><path d="M0 9.3h8.5M0 18.100h8.5" stroke="#9cc0f4" stroke-width=".7"/></svg>
<div style="left:545.3px;top:213px;height:14px;line-height:14px;font-size:10.3px;color:#333"><span class="t2" style="transform:scaleX(.912)">Foreach Loop Container</span></div>
<svg style="left:878.5px;top:210.5px;width:17px;height:17px" viewBox="0 0 17 17"><circle cx="8.5" cy="8.5" r="7.6" fill="#fff" stroke="#7a7a7a" stroke-width="1"/><path d="M5.5 10l3-3 3 3" stroke="#333" stroke-width="1.4" fill="none"/></svg>
<div class="task" style="left:379px;top:92px;width:136px;height:37px"><div style="position:absolute;left:3.2px;top:9.299999999999997px"><svg class="tic" viewBox="0 0 28 16"><defs><linearGradient id="cy" x1="0" x2="1"><stop offset="0" stop-color="#efcf68"/><stop offset=".35" stop-color="#fdf4c0"/><stop offset=".7" stop-color="#f7e08a"/><stop offset="1" stop-color="#e6bf50"/></linearGradient><linearGradient id="ga" x1="0" x2="0" y1="0" y2="1"><stop offset="0" stop-color="#6cc06c"/><stop offset=".5" stop-color="#2f8f3a"/><stop offset="1" stop-color="#1d6e28"/></linearGradient></defs><rect x=".5" y=".8" width="9.3" height="15" rx="2.2" fill="url(#cy)" stroke="#dcb856" stroke-width=".9"/><rect x="18.2" y=".8" width="9.3" height="15" rx="2.2" fill="url(#cy)" stroke="#dcb856" stroke-width=".9"/><rect x="7" y="4.5" width="13" height="7.5" fill="#fff" opacity=".55"/><path d="M8.3 6.6h7.5V4l5 4.4-5 4.4v-2.6H8.3z" fill="url(#ga)" stroke="#1f6b26" stroke-width=".6"/></svg></div><div class="tl" style="left:42px;top:11.0px"><span class="t2">Task</span></div></div>
<div class="task" style="left:267.5px;top:165px;width:143.5px;height:37.5px"><div style="position:absolute;left:3.7px;top:10px"><svg class="tic" viewBox="0 0 28 16"><defs><linearGradient id="cy" x1="0" x2="1"><stop offset="0" stop-color="#efcf68"/><stop offset=".35" stop-color="#fdf4c0"/><stop offset=".7" stop-color="#f7e08a"/><stop offset="1" stop-color="#e6bf50"/></linearGradient><linearGradient id="ga" x1="0" x2="0" y1="0" y2="1"><stop offset="0" stop-color="#6cc06c"/><stop offset=".5" stop-color="#2f8f3a"/><stop offset="1" stop-color="#1d6e28"/></linearGradient></defs><rect x=".5" y=".8" width="9.3" height="15" rx="2.2" fill="url(#cy)" stroke="#dcb856" stroke-width=".9"/><rect x="18.2" y=".8" width="9.3" height="15" rx="2.2" fill="url(#cy)" stroke="#dcb856" stroke-width=".9"/><rect x="7" y="4.5" width="13" height="7.5" fill="#fff" opacity=".55"/><path d="M8.3 6.6h7.5V4l5 4.4-5 4.4v-2.6H8.3z" fill="url(#ga)" stroke="#1f6b26" stroke-width=".6"/></svg></div><div class="tl" style="left:42.5px;top:13.0px"><span class="t2">Task 2</span></div></div>
<div class="task" style="left:648.5px;top:254px;width:133.5px;height:37px"><div style="position:absolute;left:3.2px;top:9.5px"><svg class="tic" viewBox="0 0 28 16"><defs><linearGradient id="cy" x1="0" x2="1"><stop offset="0" stop-color="#efcf68"/><stop offset=".35" stop-color="#fdf4c0"/><stop offset=".7" stop-color="#f7e08a"/><stop offset="1" stop-color="#e6bf50"/></linearGradient><linearGradient id="ga" x1="0" x2="0" y1="0" y2="1"><stop offset="0" stop-color="#6cc06c"/><stop offset=".5" stop-color="#2f8f3a"/><stop offset="1" stop-color="#1d6e28"/></linearGradient></defs><rect x=".5" y=".8" width="9.3" height="15" rx="2.2" fill="url(#cy)" stroke="#dcb856" stroke-width=".9"/><rect x="18.2" y=".8" width="9.3" height="15" rx="2.2" fill="url(#cy)" stroke="#dcb856" stroke-width=".9"/><rect x="7" y="4.5" width="13" height="7.5" fill="#fff" opacity=".55"/><path d="M8.3 6.6h7.5V4l5 4.4-5 4.4v-2.6H8.3z" fill="url(#ga)" stroke="#1f6b26" stroke-width=".6"/></svg></div><div class="tl" style="left:40.5px;top:11.1px"><span class="t2">Task 3</span></div></div>
<div class="task" style="left:549px;top:325.5px;width:142px;height:37.5px"><div style="position:absolute;left:3.7px;top:9.5px"><svg class="tic" viewBox="0 0 28 16"><defs><linearGradient id="cy" x1="0" x2="1"><stop offset="0" stop-color="#efcf68"/><stop offset=".35" stop-color="#fdf4c0"/><stop offset=".7" stop-color="#f7e08a"/><stop offset="1" stop-color="#e6bf50"/></linearGradient><linearGradient id="ga" x1="0" x2="0" y1="0" y2="1"><stop offset="0" stop-color="#6cc06c"/><stop offset=".5" stop-color="#2f8f3a"/><stop offset="1" stop-color="#1d6e28"/></linearGradient></defs><rect x=".5" y=".8" width="9.3" height="15" rx="2.2" fill="url(#cy)" stroke="#dcb856" stroke-width=".9"/><rect x="18.2" y=".8" width="9.3" height="15" rx="2.2" fill="url(#cy)" stroke="#dcb856" stroke-width=".9"/><rect x="7" y="4.5" width="13" height="7.5" fill="#fff" opacity=".55"/><path d="M8.3 6.6h7.5V4l5 4.4-5 4.4v-2.6H8.3z" fill="url(#ga)" stroke="#1f6b26" stroke-width=".6"/></svg></div><div class="tl" style="left:41px;top:12.0px"><span class="t2">Task 4</span></div></div>
<div class="task" style="left:753px;top:329.5px;width:142.5px;height:37px"><div style="position:absolute;left:4.2px;top:10.5px"><svg class="tic" viewBox="0 0 28 16"><defs><linearGradient id="cy" x1="0" x2="1"><stop offset="0" stop-color="#efcf68"/><stop offset=".35" stop-color="#fdf4c0"/><stop offset=".7" stop-color="#f7e08a"/><stop offset="1" stop-color="#e6bf50"/></linearGradient><linearGradient id="ga" x1="0" x2="0" y1="0" y2="1"><stop offset="0" stop-color="#6cc06c"/><stop offset=".5" stop-color="#2f8f3a"/><stop offset="1" stop-color="#1d6e28"/></linearGradient></defs><rect x=".5" y=".8" width="9.3" height="15" rx="2.2" fill="url(#cy)" stroke="#dcb856" stroke-width=".9"/><rect x="18.2" y=".8" width="9.3" height="15" rx="2.2" fill="url(#cy)" stroke="#dcb856" stroke-width=".9"/><rect x="7" y="4.5" width="13" height="7.5" fill="#fff" opacity=".55"/><path d="M8.3 6.6h7.5V4l5 4.4-5 4.4v-2.6H8.3z" fill="url(#ga)" stroke="#1f6b26" stroke-width=".6"/></svg></div><div class="tl" style="left:41.5px;top:12.6px"><span class="t2">Task 5</span></div></div>
<div class="task" style="left:640.5px;top:443.5px;width:142.5px;height:36.5px"><div style="position:absolute;left:4.2px;top:10.0px"><svg class="tic" viewBox="0 0 28 16"><defs><linearGradient id="cy" x1="0" x2="1"><stop offset="0" stop-color="#efcf68"/><stop offset=".35" stop-color="#fdf4c0"/><stop offset=".7" stop-color="#f7e08a"/><stop offset="1" stop-color="#e6bf50"/></linearGradient><linearGradient id="ga" x1="0" x2="0" y1="0" y2="1"><stop offset="0" stop-color="#6cc06c"/><stop offset=".5" stop-color="#2f8f3a"/><stop offset="1" stop-color="#1d6e28"/></linearGradient></defs><rect x=".5" y=".8" width="9.3" height="15" rx="2.2" fill="url(#cy)" stroke="#dcb856" stroke-width=".9"/><rect x="18.2" y=".8" width="9.3" height="15" rx="2.2" fill="url(#cy)" stroke="#dcb856" stroke-width=".9"/><rect x="7" y="4.5" width="13" height="7.5" fill="#fff" opacity=".55"/><path d="M8.3 6.6h7.5V4l5 4.4-5 4.4v-2.6H8.3z" fill="url(#ga)" stroke="#1f6b26" stroke-width=".6"/></svg></div><div class="tl" style="left:42.0px;top:11.2px"><span class="t2">Task 6</span></div></div>
<div style="left:584px;top:432px;height:14px;line-height:14px;font-size:10.5px;color:#333;letter-spacing:.3px">A &gt; B</div>

<!-- zoom slider -->
<div style="left:865px;top:549px;height:8px;line-height:8px;font-size:7px;color:#b4b2a2">100%</div>
<div style="left:863px;top:558.5px;width:23px;height:1px;background:#a9a798"></div>
<div style="left:869px;top:559px;width:2px;height:91px;background:#a3a193"></div>
<svg style="left:881px;top:562px;width:4px;height:86px" viewBox="0 0 4 86"><rect x="0" y="1.00" width="3.5" height="1.4" fill="#7d7c70"/><rect x="0" y="5.32" width="3.5" height="1.4" fill="#7d7c70"/><rect x="0" y="9.64" width="3.5" height="1.4" fill="#7d7c70"/><rect x="0" y="13.96" width="3.5" height="1.4" fill="#7d7c70"/><rect x="0" y="18.28" width="3.5" height="1.4" fill="#7d7c70"/><rect x="0" y="22.60" width="3.5" height="1.4" fill="#7d7c70"/><rect x="0" y="26.92" width="3.5" height="1.4" fill="#7d7c70"/><rect x="0" y="31.24" width="3.5" height="1.4" fill="#7d7c70"/><rect x="0" y="35.56" width="3.5" height="1.4" fill="#7d7c70"/><rect x="0" y="39.88" width="3.5" height="1.4" fill="#7d7c70"/><rect x="0" y="44.20" width="3.5" height="1.4" fill="#7d7c70"/><rect x="0" y="48.52" width="3.5" height="1.4" fill="#7d7c70"/><rect x="0" y="52.84" width="3.5" height="1.4" fill="#7d7c70"/><rect x="0" y="57.16" width="3.5" height="1.4" fill="#7d7c70"/><rect x="0" y="61.48" width="3.5" height="1.4" fill="#7d7c70"/><rect x="0" y="65.80" width="3.5" height="1.4" fill="#7d7c70"/><rect x="0" y="70.12" width="3.5" height="1.4" fill="#7d7c70"/><rect x="0" y="74.44" width="3.5" height="1.4" fill="#7d7c70"/><rect x="0" y="78.76" width="3.5" height="1.4" fill="#7d7c70"/><rect x="0" y="83.08" width="3.5" height="1.4" fill="#7d7c70"/></svg>
<svg style="left:864px;top:601px;width:22px;height:10px" viewBox="0 0 22 10"><path d="M.5 1h12l4 4.5h5v1H.5z" fill="#dcdaca" stroke="#a5a396" stroke-width=".8"/><rect x="1" y="5" width="12" height="4" fill="#d6d4c6"/></svg>
<div style="left:863px;top:650px;width:23px;height:1px;background:#bdbbac"></div>
<div style="left:864px;top:652.5px;width:22px;height:23px;background:#e9e8d6;border:1px solid #d3d1c0"></div>
<div style="left:870.5px;top:659.5px;width:9px;height:9px;background:#f7f6ea;border:1.5px solid #cfcdbe"></div><svg style="left:865px;top:653.5px;width:20px;height:21px" viewBox="0 0 20 21"><path d="M2.5 2.5l3 3M17.5 2.5l-3 3M2.5 18.5l3-3M17.5 18.5l-3-3" stroke="#d2d0c0" stroke-width="1.5"/></svg>

<!-- horizontal scrollbar -->
<div style="left:206px;top:679.5px;width:704px;height:13.5px;background:#e9e7e1"></div>
<div style="left:206px;top:680px;width:13px;height:13px;background:#d4d0c8;border:1px solid;border-color:#fff #404040 #404040 #fff"></div>
<svg style="left:210px;top:683px;width:4px;height:7px" viewBox="0 0 4 7"><path d="M4 0v7L0 3.5z" fill="#111"/></svg>
<div style="left:261px;top:680px;width:632px;height:13px;background:#d0cdc5;border:1px solid;border-color:#f4f3ee #55534e #55534e #f4f3ee"></div>
<div style="left:894.5px;top:680px;width:15.2px;height:13px;background:#d4d0c8;border:1px solid;border-color:#fff #404040 #404040 #fff"></div>
<svg style="left:900.5px;top:683px;width:4px;height:7px" viewBox="0 0 4 7"><path d="M0 0v7l4-3.5z" fill="#111"/></svg>
<div style="left:204px;top:693px;width:707px;height:1.3px;background:#3a4458"></div><div style="left:204px;top:695.2px;width:707px;height:1px;background:#8c8a86"></div>
<div style="left:204px;top:696.2px;width:707px;height:3.5px;background:#e9e7e1"></div>

<!-- connection managers -->
<div style="left:206px;top:699.5px;width:123.5px;height:20px;background:#d4d0c8;border:1px solid;border-color:#fff #444 transparent #fff;border-right-width:1.5px"></div>
<svg style="left:212px;top:701.5px;width:13px;height:15px" viewBox="0 0 13 15"><path d="M1 12l3-2h5l3 2z" fill="#8ea6d8"/><rect x="2.5" y=".7" width="8" height="11" rx="2.5" fill="#f2d25a" stroke="#b99428" stroke-width=".8"/><path d="M5 2v8" stroke="#fbeea0" stroke-width="1.5"/><path d="M6.5 11.5V14" stroke="#667" stroke-width="1"/></svg>
<div style="left:229.3px;top:702.5px;height:14px;line-height:14px"><span class="t" style="transform:scaleX(.918)">Connection Managers</span></div>
<div style="left:206px;top:716px;width:704px;height:3.5px;background:#e2e0da"></div><div style="left:207.5px;top:719.5px;width:699.5px;height:54.5px;background:#fff;border:solid #5e5e5e;border-width:2px 1px 2px 2px;border-right-color:#f4f3ee;border-bottom-color:#ebe9e3"></div>
<div style="left:404.5px;top:739.6px;height:14px;line-height:14px;color:#111"><span class="t" style="transform:scaleX(.924)">Right-click here to add a new connection manager to the SSIS package.</span></div>
<div style="left:204px;top:776.800px;width:707px;height:1.5px;background:#55534e"></div>
<div style="left:204px;top:778.3px;width:707px;height:2.2px;background:#f3efd2"></div>
</body></html>
